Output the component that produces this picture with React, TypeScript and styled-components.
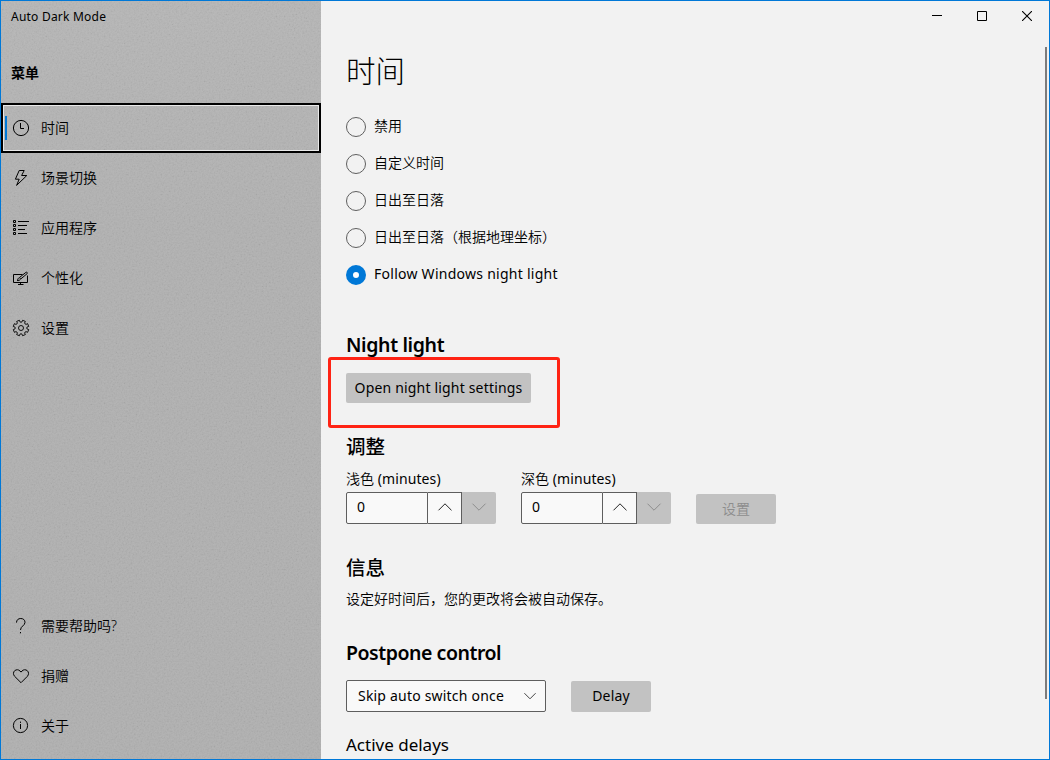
import React from "react";
import styled, { createGlobalStyle } from "styled-components";

const GlobalStyle = createGlobalStyle`
  *, *::before, *::after { box-sizing: border-box; }
  body {
    margin: 0;
    overflow: hidden;
    font-family: "Noto Sans", "Noto Sans CJK SC", sans-serif;
    font-size: 14px;
    font-weight: 350;
    color: #000;
  }
`;

const Window = styled.div`
  display: flex;
  width: 1050px;
  height: 760px;
  overflow: hidden;
  border: 1px solid #0078d7;
  background: #f2f2f2;
`;

const Sidebar = styled.aside`
  position: relative;
  isolation: isolate;
  display: flex;
  flex-direction: column;
  flex: 0 0 320px;
  padding-bottom: 8px;
  background: linear-gradient(180deg, #b6b6b6 0%, #b1b1b1 30%, #b0b0b0 100%);
`;

const Grain = styled.svg`
  position: absolute;
  inset: 0;
  z-index: -1;
  width: 100%;
  height: 100%;
  opacity: 0.06;
`;

const AppName = styled.div`
  height: 32px;
  padding-left: 10px;
  line-height: 31px;
  font-size: 12px;
  font-weight: 400;
  letter-spacing: 0.22px;
`;

const MenuTitle = styled.div`
  height: 70px;
  padding: 30px 0 0 10px;
  line-height: 20px;
  font-weight: 700;
`;

const NavList = styled.nav`
  display: flex;
  flex-direction: column;

  & + & { margin-top: auto; }
`;

const NavItem = styled.a<{ $active?: boolean }>`
  display: flex;
  align-items: center;
  gap: 11px;
  height: 50px;
  padding-left: 11px;
  ${(p) =>
    p.$active &&
    `
    padding-left: 2px;
    gap: 0;
    border: 2px solid #000;
    box-shadow: inset 0 0 0 1px #e9e9e9;
  `}

  & > svg { flex: none; }
`;

const ActiveMark = styled.span`
  width: 2px;
  height: 24px;
  margin-right: 5px;
  background: #0078d7;
`;

const NavLabel = styled.span<{ $active?: boolean }>`
  margin-left: ${(p) => (p.$active ? 11 : 0)}px;
  line-height: 20px;
`;

const Main = styled.main`
  position: relative;
  flex: 1;
  display: flex;
  flex-direction: column;
  min-width: 0;
`;

const TitleBar = styled.div`
  display: flex;
  justify-content: flex-end;
  flex: 0 0 30px;
`;

const CaptionButton = styled.div`
  display: flex;
  align-items: center;
  justify-content: center;
  width: 45px;
  height: 30px;
`;

const Content = styled.div`
  display: flex;
  flex-direction: column;
  align-items: flex-start;
  padding-left: 25px;
`;

const PageTitle = styled.h1`
  margin: 18px 0 0;
  height: 59px;
  line-height: 44px;
  font-size: 29.5px;
  font-weight: 300;
`;

const RadioRow = styled.label`
  display: flex;
  align-items: center;
  gap: 8px;
  height: 37px;

  & > :last-child { margin-bottom: 2px; }
`;

const RadioDot = styled.span<{ $checked?: boolean }>`
  width: 20px;
  height: 20px;
  border-radius: 50%;
  border: ${(p) => (p.$checked ? "7px solid #0078d7" : "1px solid #5f5f5f")};
  background: ${(p) => (p.$checked ? "#fff" : "transparent")};
`;

const Text = styled.span<{ $latin?: boolean; $size?: number; $track?: number }>`
  line-height: 20px;
  font-size: ${(p) => p.$size ?? 14}px;
  font-weight: ${(p) => (p.$latin ? 400 : 350)};
  letter-spacing: ${(p) => p.$track ?? 0}px;
  white-space: nowrap;
`;

const Heading = styled.h2<{ $top: number; $cjk?: boolean; $track?: number }>`
  margin: ${(p) => p.$top}px 0 0;
  line-height: 28px;
  font-size: 19.5px;
  font-weight: ${(p) => (p.$cjk ? 500 : 600)};
  letter-spacing: ${(p) => p.$track ?? 0}px;
`;

const Button = styled.button<{ $w: number; $h?: number; $track?: number }>`
  width: ${(p) => p.$w}px;
  height: ${(p) => p.$h ?? 30}px;
  padding: 0 0 1px;
  border: 0;
  border-radius: 2px;
  background: #c2c2c2;
  font: inherit;
  font-weight: 400;
  letter-spacing: ${(p) => p.$track ?? 0}px;
  line-height: 20px;
  white-space: nowrap;
  color: #000;

  &:disabled {
    font-weight: 350;
    color: #8d8d8d;
  }
`;

const Callout = styled.div`
  position: relative;
  margin-top: 14px;

  &::after {
    content: "";
    position: absolute;
    left: -18px;
    top: -16px;
    width: 232px;
    height: 71px;
    border: 3px solid #ff2314;
    border-radius: 3px;
  }
`;

const Row = styled.div<{ $top: number }>`
  display: flex;
  align-items: flex-end;
  gap: 25px;
  margin-top: ${(p) => p.$top}px;
`;

const Field = styled.div`
  display: flex;
  flex-direction: column;
  gap: 3px;
`;

const Spinner = styled.div`
  display: flex;
  width: 150px;
  height: 32px;
`;

const SpinValue = styled.div`
  width: 82px;
  padding-left: 10px;
  border: 1px solid #5e5e5e;
  border-radius: 2px 0 0 2px;
  background: #f9f9f9;
  font-weight: 400;
  line-height: 28px;
`;

const SpinButton = styled.div<{ $disabled?: boolean }>`
  display: flex;
  align-items: center;
  justify-content: center;
  width: 34px;
  color: ${(p) => (p.$disabled ? "#8d8d8d" : "#222")};
  background: ${(p) => (p.$disabled ? "#c2c2c2" : "#f9f9f9")};
  border: ${(p) => (p.$disabled ? "0" : "1px solid #5e5e5e")};
  border-left: 0;
  border-radius: ${(p) => (p.$disabled ? "0 2px 2px 0" : "0")};

  & > svg { margin-bottom: 2px; }
`;

const Select = styled.div`
  display: flex;
  align-items: center;
  justify-content: space-between;
  width: 200px;
  height: 32px;
  padding: 0 9px 0 11px;
  border: 1px solid #5e5e5e;
  border-radius: 2px;
  background: #f9f9f9;
`;

const Info = styled.p`
  margin: 7px 0 0;
  line-height: 20px;
`;

const SubHeading = styled.h3`
  margin: 21px 0 0;
  line-height: 24px;
  font-size: 17px;
  font-weight: 400;
  letter-spacing: 0;
`;

const Scrollbar = styled.div`
  position: absolute;
  top: 46px;
  right: 2px;
  width: 2px;
  height: 652px;
  background: #7c7c7c;
`;

const Icon = ({ children }: { children: React.ReactNode }) => (
  <svg width="18" height="18" viewBox="0 0 18 18" fill="none" stroke="#000" strokeWidth="1">
    {children}
  </svg>
);

const ClockIcon = () => (
  <Icon>
    <circle cx="9" cy="9" r="7.6" />
    <path d="M8.5 4v5.5H12" />
  </Icon>
);

const BoltIcon = () => (
  <Icon>
    <path d="M7.2 1.5h5L9.6 6.5h5.2L4.6 16.4l2.6-6.2H3.4z" strokeLinejoin="round" />
  </Icon>
);

const ListIcon = () => (
  <Icon>
    <path d="M1.5 1.5h2v2h-2zM1.5 5.5h2v2h-2zM1.5 9.5h2v2h-2zM1.5 13.5h2v2h-2zM6 2.5h11M6 6.5h9M6 10.5h7M6 14.5h9" />
  </Icon>
);

const BrushIcon = () => (
  <Icon>
    <path d="M10.5 5.5h-9v8h14v-7M8.5 13.5v2M6 15.5h5.5" />
    <path d="M5 11.5c1-.3.7-1.8 1.8-2.6 1-.6 2.2.5 1.5 1.6-.7 1-2 1.2-3.3 1zM7.6 8.4l6.3-5c.8-.7 2 .4 1.3 1.2L9 9.8" />
  </Icon>
);

const teeth = Array.from({ length: 8 }, (_, i) => {
  const at = (deg: number, r: number) => {
    const a = ((i * 45 + deg - 67.5) * Math.PI) / 180;
    return `${(9 + r * Math.cos(a)).toFixed(2)} ${(9 + r * Math.sin(a)).toFixed(2)}`;
  };
  return `${i ? "L" : "M"}${at(-11, 7.9)}L${at(11, 7.9)}L${at(13, 6.2)}Q${at(22.5, 5.4)} ${at(32, 6.2)}`;
}).join("");

const GearIcon = () => (
  <Icon>
    <path d={`${teeth}Z`} strokeLinejoin="round" strokeWidth="0.9" />
    <circle cx="9" cy="9" r="2.5" strokeWidth="0.9" />
  </Icon>
);

const HelpIcon = () => (
  <Icon>
    <path d="M4.5 5.6C4.5 3 6.2 1.5 8.8 1.5s4.2 1.6 4.2 3.8c0 3.4-4.5 3.8-4.5 7.7M8.5 15v1.3" />
  </Icon>
);

const HeartIcon = () => (
  <Icon>
    <path d="M9 15.7 2.6 9.3C1 7.5 1.2 5 2.7 3.7c1.6-1.4 3.9-1.2 5.3.3l1 1.1 1-1.1c1.4-1.5 3.7-1.7 5.3-.3C16.8 5 17 7.5 15.4 9.3z" />
  </Icon>
);

const InfoIcon = () => (
  <Icon>
    <circle cx="8.5" cy="8.5" r="7.1" />
    <path d="M8.5 7v5M8.5 4.6v1.3" />
  </Icon>
);

const Chevron = ({ up }: { up?: boolean }) => (
  <svg width="16" height="10" viewBox="0 0 16 10" fill="none" stroke="currentColor" strokeWidth="1">
    <path d={up ? "M1.5 8.3 8 1.8l6.5 6.5" : "M1.5 1.7 8 8.2l6.5-6.5"} />
  </svg>
);

const SmallChevron = () => (
  <svg width="12" height="8" viewBox="0 0 12 8" fill="none" stroke="#444" strokeWidth="1">
    <path d="M.4 1.2 6 6.8l5.6-5.6" />
  </svg>
);

const menu = [
  { label: "场景切换", icon: <BoltIcon /> },
  { label: "应用程序", icon: <ListIcon /> },
  { label: "个性化", icon: <BrushIcon /> },
  { label: "设置", icon: <GearIcon /> },
];

const footer = [
  { label: "需要帮助吗?", icon: <HelpIcon /> },
  { label: "捐赠", icon: <HeartIcon /> },
  { label: "关于", icon: <InfoIcon /> },
];

const modes = ["禁用", "自定义时间", "日出至日落", "日出至日落（根据地理坐标）"];

const MinuteField = ({ label }: { label: string }) => (
  <Field>
    <Text>
      {label}
      <Text $latin $track={0.1}> (minutes)</Text>
    </Text>
    <Spinner>
      <SpinValue>0</SpinValue>
      <SpinButton><Chevron up /></SpinButton>
      <SpinButton $disabled><Chevron /></SpinButton>
    </Spinner>
  </Field>
);

export default function App() {
  return (
    <>
      <GlobalStyle />
      <Window>
        <Sidebar>
          <Grain>
            <filter id="grain">
              <feTurbulence type="fractalNoise" baseFrequency="0.6" numOctaves="2" />
              <feColorMatrix values="1.5 0 0 0 -0.25  1.5 0 0 0 -0.25  1.5 0 0 0 -0.25  0 0 0 0 1" />
            </filter>
            <rect width="100%" height="100%" filter="url(#grain)" />
          </Grain>
          <AppName>Auto Dark Mode</AppName>
          <MenuTitle>菜单</MenuTitle>
          <NavList>
            <NavItem $active>
              <ActiveMark />
              <ClockIcon />
              <NavLabel $active>时间</NavLabel>
            </NavItem>
            {menu.map((m) => (
              <NavItem key={m.label}>
                {m.icon}
                <NavLabel>{m.label}</NavLabel>
              </NavItem>
            ))}
          </NavList>
          <NavList>
            {footer.map((m) => (
              <NavItem key={m.label}>
                {m.icon}
                <NavLabel>{m.label}</NavLabel>
              </NavItem>
            ))}
          </NavList>
        </Sidebar>
        <Main>
          <TitleBar>
            <CaptionButton>
              <svg width="10" height="10" stroke="#000"><path d="M0 4.5h10" /></svg>
            </CaptionButton>
            <CaptionButton>
              <svg width="10" height="10" fill="none" stroke="#000"><path d="M.5.5h9v9h-9z" /></svg>
            </CaptionButton>
            <CaptionButton>
              <svg width="10" height="10" stroke="#000" strokeWidth="1.1"><path d="M0 0l10 10M10 0L0 10" /></svg>
            </CaptionButton>
          </TitleBar>
          <Content>
            <PageTitle>时间</PageTitle>
            {modes.map((m) => (
              <RadioRow key={m}>
                <RadioDot />
                <Text>{m}</Text>
              </RadioRow>
            ))}
            <RadioRow>
              <RadioDot $checked />
              <Text $latin $track={0.26}>Follow Windows night light</Text>
            </RadioRow>
            <Heading $top={38} $track={-0.36}>Night light</Heading>
            <Callout>
              <Button $w={185} $track={0.18}>Open night light settings</Button>
            </Callout>
            <Heading $top={30} $cjk>调整</Heading>
            <Row $top={8}>
              <MinuteField label="浅色" />
              <MinuteField label="深色" />
              <Button $w={80} disabled>设置</Button>
            </Row>
            <Heading $top={30} $cjk>信息</Heading>
            <Info>设定好时间后，您的更改将会被自动保存。</Info>
            <Heading $top={30} $track={-0.46}>Postpone control</Heading>
            <Row $top={13}>
              <Select>
                <Text $latin $track={0.2}>Skip auto switch once</Text>
                <SmallChevron />
              </Select>
              <Button $w={80} $h={31} $track={0.2}>Delay</Button>
            </Row>
            <SubHeading>Active delays</SubHeading>
          </Content>
          <Scrollbar />
        </Main>
      </Window>
    </>
  );
}
